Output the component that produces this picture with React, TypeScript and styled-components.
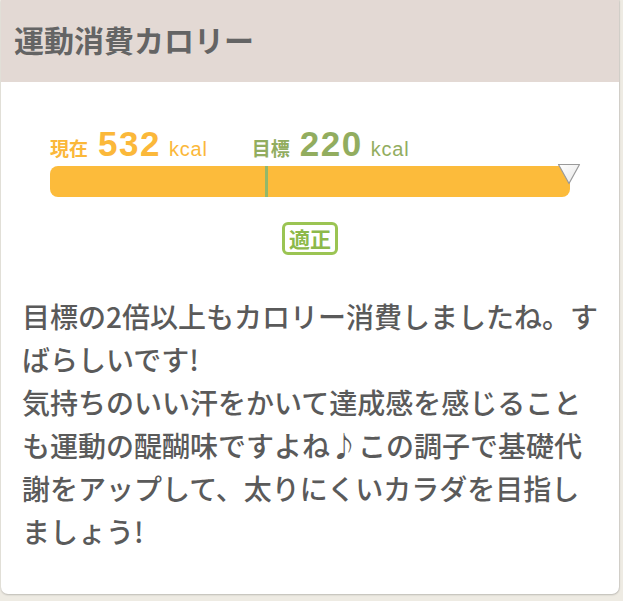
import React from "react";
import styled, { createGlobalStyle } from "styled-components";

const Global = createGlobalStyle`
  html, body { margin: 0; padding: 0; background: #eeebe3; }
  body { font-family: "Liberation Sans", "Noto Sans CJK JP", sans-serif; }
`;

const Page = styled.div`
  width: 623px;
  height: 601px;
  padding: 0 4px 0 1px;
  box-sizing: border-box;
`;

const Card = styled.section`
  background: #fff;
  border-radius: 0 0 7px 7px;
  box-shadow: 0 1px 2px rgba(0, 0, 0, 0.2), 1px 0 1px rgba(0, 0, 0, 0.08);
  height: 594px;
  overflow: hidden;
`;

const Header = styled.header`
  height: 82px;
  background: #e3d9d4;
  display: flex;
  align-items: center;
  padding: 0 0 4px 13px;
  box-sizing: border-box;
  color: #646464;
  font-family: "Noto Sans CJK JP", sans-serif;
  font-weight: 700;
  font-size: 30px;
`;

const Body = styled.div`
  padding: 0 21px;
`;

const Gauge = styled.div`
  padding: 42px 28px 0 28px;
`;

const Labels = styled.div`
  display: flex;
  align-items: baseline;
  height: 42px;
`;

const Label = styled.div<{ $color: string; $gap?: number }>`
  display: flex;
  align-items: baseline;
  color: ${(p) => p.$color};
  margin-right: ${(p) => p.$gap ?? 0}px;
`;

const Caption = styled.span`
  font-family: "Noto Sans CJK JP", sans-serif;
  font-weight: 700;
  font-size: 19px;
  margin-right: 10px;
`;

const Num = styled.span`
  font-weight: 700;
  font-size: 35px;
  letter-spacing: 1.5px;
  margin-right: 8px;
`;

const Unit = styled.span`
  font-size: 20px;
  letter-spacing: 0.8px;
  font-weight: 400;
`;

const Bar = styled.div`
  position: relative;
  height: 31px;
  background: #fcbb3b;
  border-radius: 8px;
`;

const Marker = styled.div`
  position: absolute;
  top: 0;
  bottom: 0;
  width: 3px;
  background: #93b86a;
`;

const Pointer = styled.svg`
  position: absolute;
  top: -4px;
  right: -11px;
`;

const BadgeRow = styled.div`
  display: flex;
  justify-content: center;
  margin-top: 25px;
`;

const Badge = styled.div`
  border: 3px solid #9bc453;
  border-radius: 6px;
  color: #8db94a;
  font-family: "Noto Sans CJK JP", sans-serif;
  font-weight: 700;
  font-size: 21px;
  line-height: 27px;
  padding: 0 4px;
`;

const Message = styled.p`
  margin: 40px 0 0 0;
  color: #5a5a5a;
  font-family: "Noto Sans CJK JP", sans-serif;
  font-weight: 500;
  font-size: 28px;
  line-height: 43px;
`;

export default function App() {
  const current = 532;
  const target = 220;
  const max = current;
  return (
    <>
      <Global />
      <Page>
        <Card>
          <Header>運動消費カロリー</Header>
          <Body>
            <Gauge>
              <Labels>
                <Label $color="#fbb83a" $gap={44}>
                  <Caption>現在</Caption>
                  <Num>{current}</Num>
                  <Unit>kcal</Unit>
                </Label>
                <Label $color="#92ad5f">
                  <Caption>目標</Caption>
                  <Num>{target}</Num>
                  <Unit>kcal</Unit>
                </Label>
              </Labels>
              <Bar>
                <Marker style={{ left: `${(target / max) * 100}%` }} />
                <Pointer width="24" height="24" viewBox="0 0 24 24">
                  <defs>
                    <linearGradient id="pg" x1="0" y1="0" x2="1" y2="1">
                      <stop offset="0" stopColor="#ffffff" />
                      <stop offset="1" stopColor="#e6e6e6" />
                    </linearGradient>
                  </defs>
                  <path d="M1.5 2.5 H22.5 L12 21.5 Z" fill="url(#pg)" stroke="#9a9a9a" strokeWidth="1.2" strokeLinejoin="round" />
                </Pointer>
              </Bar>
              <BadgeRow>
                <Badge>適正</Badge>
              </BadgeRow>
            </Gauge>
            <Message>
              目標の2倍以上もカロリー消費しましたね。すばらしいです!
              <br />
              気持ちのいい汗をかいて達成感を感じることも運動の醍醐味ですよね♪この調子で基礎代謝をアップして、太りにくいカラダを目指しましょう!
            </Message>
          </Body>
        </Card>
      </Page>
    </>
  );
}
